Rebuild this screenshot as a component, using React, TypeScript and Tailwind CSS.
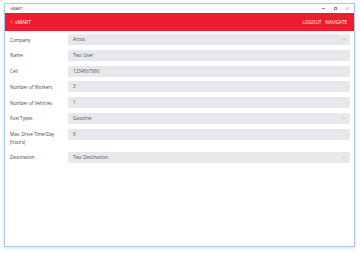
import React from "react";

const rows: { label: string[]; value: string; select?: boolean }[] = [
  { label: ["Company"], value: "Arcos", select: true },
  { label: ["Name"], value: "Test User" },
  { label: ["Cell"], value: "1234567890" },
  { label: ["Number of Workers"], value: "3" },
  { label: ["Number of Vehicles"], value: "1" },
  { label: ["Fuel Types"], value: "Gasoline", select: true },
  { label: ["Max. Drive Time/Day", "(hours)"], value: "8" },
  { label: ["Destination"], value: "Test Destination", select: true },
];

function Chevron() {
  return (
    <svg width="4" height="3" viewBox="0 0 4 3" className="shrink-0">
      <path d="M0.5 0.8 L2 2.2 L3.5 0.8" fill="none" stroke="#a0a5aa" strokeWidth="0.5" />
    </svg>
  );
}

export default function App() {
  return (
    <div
      className="w-[360px] h-[253px] bg-white pl-[4px] pt-[3px] overflow-hidden"
      style={{ fontFamily: '"Open Sans", "Noto Sans", sans-serif' }}
    >
      <div className="w-[351px] h-[244px] border border-[#a9c9e6] bg-white flex flex-col shadow-[0_1px_3px_rgba(0,0,0,0.15)]">
        {/* title bar */}
        <div className="h-[9px] flex items-center justify-between pl-[5px] pr-[5px] shrink-0">
          <span className="text-[4px] leading-none text-[#333]">sMART</span>
          <div className="flex items-center gap-[9px]">
            <div className="w-[3px] h-[0.5px] bg-[#888]" />
            <div className="w-[3px] h-[3px] border-[0.5px] border-[#888]" />
            <svg width="3" height="3" viewBox="0 0 3 3">
              <path d="M0 0 L3 3 M3 0 L0 3" stroke="#888" strokeWidth="0.5" />
            </svg>
          </div>
        </div>
        {/* red bar */}
        <div className="h-[18px] bg-[#ed1c2e] flex items-center justify-between pl-[5px] pr-[7px] shrink-0 text-white">
          <div className="flex items-center gap-[2px]">
            <svg width="3" height="4" viewBox="0 0 3 4">
              <path d="M2.4 0.3 L0.8 2 L2.4 3.7" fill="none" stroke="white" strokeWidth="0.6" />
            </svg>
            <span className="text-[5px] leading-none">sMART</span>
          </div>
          <div className="flex items-center gap-[4px] text-[4.6px] leading-none">
            <span>LOGOUT</span>
            <span>NAVIGATE</span>
          </div>
        </div>
        {/* form */}
        <div className="flex flex-col gap-[4.75px] pt-[3px] pl-[5px] pr-[4px]">
          {rows.map((r) => (
            <div key={r.value + r.label[0]} className="flex items-start">
              <div className="w-[58px] shrink-0 pt-[1.5px] pb-[1px] text-[4.6px] leading-[8px] text-[#444]">
                {r.label.map((l) => (
                  <div key={l}>{l}</div>
                ))}
              </div>
              <div className="flex-1 h-[11px] bg-[#e6e8eb] rounded-[1px] flex items-center justify-between pl-[5px] pr-[4px] text-[4.6px] text-[#555]">
                <span>{r.value}</span>
                {r.select && <Chevron />}
              </div>
            </div>
          ))}
        </div>
      </div>
    </div>
  );
}
